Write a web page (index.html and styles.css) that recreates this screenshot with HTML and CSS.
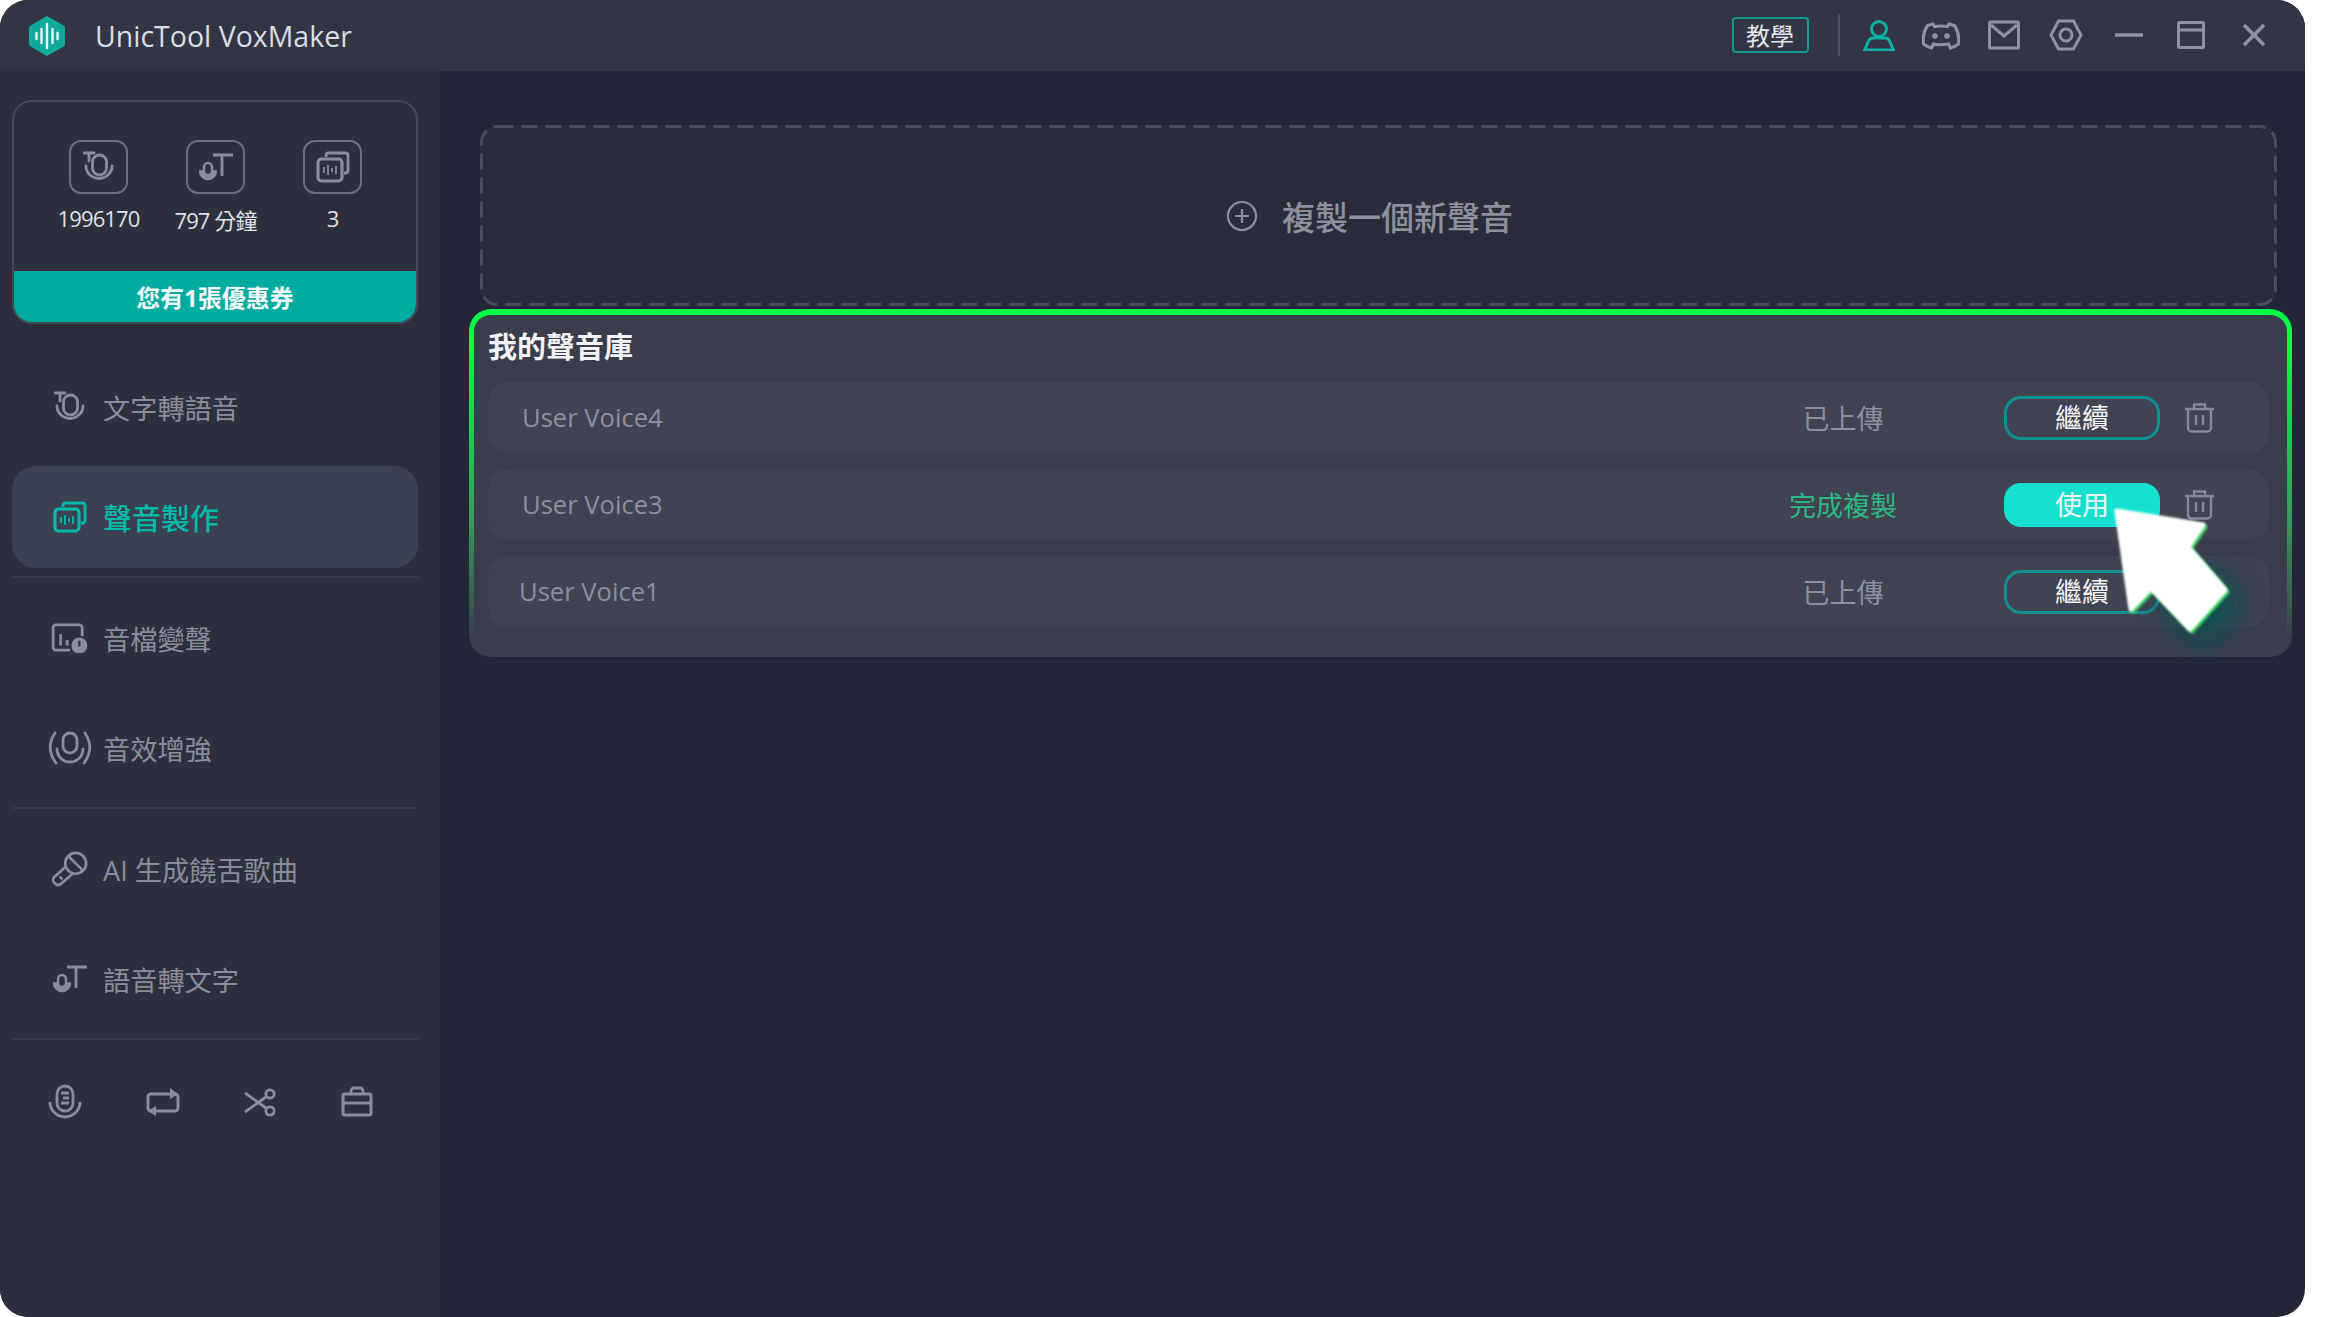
FILE: index.html
```html
<!DOCTYPE html>
<html lang="zh-Hant">
<head>
<meta charset="utf-8">
<title>UnicTool VoxMaker</title>
<link rel="stylesheet" href="styles.css">
</head>
<body>
<svg class="defs" width="0" height="0">
    <symbol id="i-tts" viewBox="0 0 32 32">
        <path d="M1 2h10M6 2v8M3 15a13 12.500 0 0 0 26 0" fill="none" stroke="currentColor" stroke-width="2.800" stroke-linecap="round"/>
        <rect x="9.500" y="4" width="14" height="20" rx="7" fill="none" stroke="currentColor" stroke-width="2.800"/>
    </symbol>
    <symbol id="i-vtt" viewBox="0 0 36 28">
        <path d="M15 2h20M24 2v21" fill="none" stroke="currentColor" stroke-width="2.800"/>
        <rect x="6" y="10" width="8" height="12" rx="4" fill="none" stroke="currentColor" stroke-width="2.400"/>
        <path d="M1.500 18a8.500 8.500 0 0 0 17 0l-3 0a5.500 5.500 0 0 1-11 0z" fill="currentColor" stroke="currentColor" stroke-width="1.400"/>
    </symbol>
    <symbol id="i-clone" viewBox="0 0 34 32">
        <path d="M10 6V4.500A2.500 2.500 0 0 1 12.500 2h17A2.500 2.500 0 0 1 32 4.500v15a2.500 2.500 0 0 1-2.500 2.500H28" fill="none" stroke="currentColor" stroke-width="2.800"/>
        <rect x="2" y="8" width="24" height="22" rx="3.500" fill="none" stroke="currentColor" stroke-width="3.200"/>
        <path d="M8 16v6M12 14v10M16 17v4M20 15v8" fill="none" stroke="currentColor" stroke-width="1.800"/>
    </symbol>
    <symbol id="i-change" viewBox="0 0 40 32">
        <path d="M20 29H5a3 3 0 0 1-3-3V5a3 3 0 0 1 3-3h25a3 3 0 0 1 3 3v9M10 12v12M17 18v6" fill="none" stroke="currentColor" stroke-width="3"/>
        <circle cx="30" cy="24" r="8.500" fill="currentColor"/>
        <path d="M30 19v6" stroke="#2c303d" stroke-width="2.400"/>
    </symbol>
    <symbol id="i-enhance" viewBox="0 0 44 36">
        <rect x="15" y="3" width="14" height="20" rx="7" fill="none" stroke="currentColor" stroke-width="2.800"/>
        <path d="M9 19a13 13 0 0 0 26 0M7 3Q-3 18 8 33M37 3Q47 18 36 33" fill="none" stroke="currentColor" stroke-width="2.800" stroke-linecap="round"/>
    </symbol>
    <symbol id="i-sing" viewBox="0 0 40 38">
        <circle cx="26" cy="13" r="11" fill="none" stroke="currentColor" stroke-width="2.800"/>
        <path d="M18 5l16 16M16 16L3 28a4 4 0 0 0 0 5l2 2a4 4 0 0 0 5 0l14-12M9 27l3 3" fill="none" stroke="currentColor" stroke-width="2.800"/>
    </symbol>
    <symbol id="i-mic" viewBox="0 0 34 36">
        <rect x="9" y="2" width="16" height="25" rx="8" fill="none" stroke="currentColor" stroke-width="2.800"/>
        <path d="M2 18a15 15 0 0 0 30 0M13 9h8M15 14h6M13 19h8" fill="none" stroke="currentColor" stroke-width="2.800"/>
    </symbol>
    <symbol id="i-loop" viewBox="0 0 34 30">
        <path d="M9 24H5a3 3 0 0 1-3-3V10a3 3 0 0 1 3-3h19M28 7h1a3 3 0 0 1 3 3v11a3 3 0 0 1-3 3H9" fill="none" stroke="currentColor" stroke-width="3"/>
        <path d="M24 1l8 6-8 5zM10 29l-8-5 8-5z" fill="currentColor"/>
    </symbol>
    <symbol id="i-cut" viewBox="0 0 34 32">
        <circle cx="27" cy="8" r="4.200" fill="none" stroke="currentColor" stroke-width="2.800"/>
        <circle cx="27" cy="25" r="4.200" fill="none" stroke="currentColor" stroke-width="2.800"/>
        <path d="M2 7l21 15M2 26L23 11" fill="none" stroke="currentColor" stroke-width="2.800"/>
    </symbol>
    <symbol id="i-case" viewBox="0 0 32 32">
        <path d="M10 8V5a3 3 0 0 1 3-3h6a3 3 0 0 1 3 3v3" fill="none" stroke="currentColor" stroke-width="2.800"/>
        <rect x="2" y="8" width="28" height="21" rx="1.500" fill="none" stroke="currentColor" stroke-width="3"/>
        <path d="M2 17h28" stroke="currentColor" stroke-width="2.800"/>
    </symbol>
    <symbol id="i-trash" viewBox="0 0 31 30">
        <path d="M1 6h29M10 5V1.500h11V5M4 6v19a3.500 3.500 0 0 0 3.500 3.500h16a3.500 3.500 0 0 0 3.500-3.500V6M12 12v10M19 12v10" fill="none" stroke="currentColor" stroke-width="2.400"/>
    </symbol>
</svg>

<div class="app">
    <header class="titlebar">
        <svg class="logo" viewBox="0 0 40 40">
            <path d="M20 0l16.500 9.500a3 3 0 0 1 1.500 2.500v16a3 3 0 0 1-1.500 2.500L20 40 3.500 30.500A3 3 0 0 1 2 28V12a3 3 0 0 1 1.500-2.500z" fill="#10a99c"/>
            <path d="M9.500 17v6M14.500 13v14M20 8v24M25.500 13v14M30.500 17v6" stroke="#e6f7f4" stroke-width="2.400" stroke-linecap="round"/>
        </svg>
        <span class="app-name">UnicTool VoxMaker</span>
        <div class="title-tools">
            <span class="tutorial">教學</span>
            <span class="title-sep"></span>
            <span class="tool tool-on"><svg viewBox="0 0 32 32" width="32" height="32"><circle cx="16" cy="10" r="7.500" fill="none" stroke="currentColor" stroke-width="3"/><path d="M1.500 31l4-9a5 5 0 0 1 4.500-3h12a5 5 0 0 1 4.500 3l4 9z" fill="none" stroke="currentColor" stroke-width="3"/></svg></span>
            <span class="tool"><svg viewBox="0 0 38 32" width="38" height="32"><path d="M11 5Q7 6 5 7 0 16 1.500 25q4 3 8 4l2-4q4 1.500 15 0l2 4q4-1 8-4Q38 16 33 7q-2-1-6-2l-1.500 2.500q-6.500-1-13 0z" fill="none" stroke="currentColor" stroke-width="3.200"/><circle cx="13" cy="17" r="2.800" fill="currentColor"/><circle cx="25" cy="17" r="2.800" fill="currentColor"/></svg></span>
            <span class="tool"><svg viewBox="0 0 32 32" width="32" height="32"><rect x="1.500" y="3" width="29" height="26" rx="1" fill="none" stroke="currentColor" stroke-width="3"/><path d="M3 6l13 11L29 6" fill="none" stroke="currentColor" stroke-width="3"/></svg></span>
            <span class="tool"><svg viewBox="0 0 34 32" width="34" height="32"><path d="M9.500 2h15L32 16l-7.500 14h-15L2 16z" fill="none" stroke="currentColor" stroke-width="3"/><circle cx="17" cy="16" r="6" fill="none" stroke="currentColor" stroke-width="3"/></svg></span>
            <span class="tool"><svg viewBox="0 0 30 32" width="30" height="32"><path d="M1 16h28" stroke="currentColor" stroke-width="3.500"/></svg></span>
            <span class="tool"><svg viewBox="0 0 28 32" width="28" height="32"><rect x="1.500" y="3.500" width="25" height="25" rx="1" fill="none" stroke="currentColor" stroke-width="3"/><path d="M1.500 11h25" stroke="currentColor" stroke-width="3"/></svg></span>
            <span class="tool"><svg viewBox="0 0 24 32" width="24" height="32"><path d="M2 6l20 20M22 6L2 26" stroke="currentColor" stroke-width="3.600"/></svg></span>
        </div>
    </header>

    <div class="content">
        <aside class="sidebar">
            <div class="account">
                <div class="stats">
                    <div class="stat">
                        <span class="stat-box"><svg width="32" height="32"><use href="#i-tts"/></svg></span>
                        <span class="stat-num">1996170</span>
                    </div>
                    <div class="stat">
                        <span class="stat-box"><svg width="36" height="28"><use href="#i-vtt"/></svg></span>
                        <span class="stat-num">797 分鐘</span>
                    </div>
                    <div class="stat">
                        <span class="stat-box"><svg width="34" height="32"><use href="#i-clone"/></svg></span>
                        <span class="stat-num">3</span>
                    </div>
                </div>
                <div class="coupon">您有1張優惠券</div>
            </div>

            <nav class="nav">
                <a class="nav-item"><span class="nav-icon"><svg width="32" height="32"><use href="#i-tts"/></svg></span><span>文字轉語音</span></a>
                <a class="nav-item active"><span class="nav-icon"><svg width="34" height="32"><use href="#i-clone"/></svg></span><span>聲音製作</span></a>
                <div class="nav-sep"></div>
                <a class="nav-item"><span class="nav-icon"><svg width="38" height="30"><use href="#i-change"/></svg></span><span>音檔變聲</span></a>
                <a class="nav-item"><span class="nav-icon"><svg width="44" height="36"><use href="#i-enhance"/></svg></span><span>音效增強</span></a>
                <div class="nav-sep"></div>
                <a class="nav-item"><span class="nav-icon"><svg width="38" height="36"><use href="#i-sing"/></svg></span><span>AI 生成饒舌歌曲</span></a>
                <a class="nav-item"><span class="nav-icon"><svg width="36" height="28"><use href="#i-vtt"/></svg></span><span>語音轉文字</span></a>
                <div class="nav-sep"></div>
            </nav>

            <div class="side-tools">
                <svg width="34" height="36"><use href="#i-mic"/></svg>
                <svg width="34" height="30"><use href="#i-loop"/></svg>
                <svg width="34" height="32"><use href="#i-cut"/></svg>
                <svg width="32" height="32"><use href="#i-case"/></svg>
            </div>
        </aside>

        <main class="main">
            <div class="clone-new">
                <svg class="dash" width="1797" height="181"><rect x="1.500" y="1.500" width="1794" height="178" rx="16" fill="none" stroke="#4b4e5a" stroke-width="3" stroke-dasharray="16 8"/></svg>
                <svg width="32" height="32" viewBox="0 0 32 32"><circle cx="16" cy="16" r="14" fill="none" stroke="#8e919c" stroke-width="2.200"/><path d="M9 16h14M16 9v14" stroke="#8e919c" stroke-width="2.200"/></svg>
                <span>複製一個新聲音</span>
            </div>

            <section class="library">
                <h2 class="library-title">我的聲音庫</h2>
                <div class="voice-row">
                    <span class="voice-name">User Voice4</span>
                    <span class="voice-state">已上傳</span>
                    <button class="btn">繼續</button>
                    <svg class="trash" width="31" height="30"><use href="#i-trash"/></svg>
                </div>
                <div class="voice-row">
                    <span class="voice-name">User Voice3</span>
                    <span class="voice-state done">完成複製</span>
                    <button class="btn btn-use">使用</button>
                    <svg class="trash" width="31" height="30"><use href="#i-trash"/></svg>
                </div>
                <div class="voice-row">
                    <span class="voice-name voice-name-tight">User Voice1</span>
                    <span class="voice-state">已上傳</span>
                    <button class="btn">繼續</button>
                    <svg class="trash" width="31" height="30"><use href="#i-trash"/></svg>
                </div>
                <svg class="cursor" width="200" height="200" viewBox="0 0 200 200">
                    <defs>
                        <filter id="glow" x="-60%" y="-60%" width="220%" height="220%"><feGaussianBlur stdDeviation="13"/></filter>
                        <filter id="edge"><feGaussianBlur stdDeviation="1"/></filter>
                    </defs>
                    <path d="M85 90L135 95 155 125 115 170 70 130z" fill="#08504d" filter="url(#glow)"/>
                    <path d="M29 33L115 47 100 69 137 112 102 151 63 110 43 131z" fill="#36c95f" stroke="#36c95f" stroke-width="5" stroke-linejoin="round" filter="url(#edge)"/>
                    <path d="M27 31L113 45 98 67 135 110 100 149 61 108 41 129z" fill="#fff" stroke="#fff" stroke-width="5" stroke-linejoin="round" filter="url(#edge)"/>
                </svg>
            </section>
        </main>
    </div>
</div>
</body>
</html>
```

FILE: styles.css
```css
body {
    margin: 0;
    background: #fff;
    font-family: "Open Sans", "Noto Sans CJK TC", sans-serif;
}

.defs {
    display: block;
    height: 0;
}

.app {
    width: 2305px;
    height: 1317px;
    display: flex;
    flex-direction: column;
    background: #232636;
    border-radius: 28px;
    overflow: hidden;
}

/* title bar */
.titlebar {
    height: 71px;
    flex: none;
    display: flex;
    align-items: center;
    padding: 0 20px 0 27px;
    background: #323644;
}
.logo {
    width: 40px;
    height: 40px;
}
.app-name {
    margin-left: 28px;
    font-size: 28.5px;
    color: #d9dde4;
}
.title-tools {
    margin: -2px 0 0 auto;
    display: flex;
    align-items: center;
}
.tutorial {
    width: 77px;
    height: 36px;
    box-sizing: border-box;
    display: flex;
    align-items: center;
    justify-content: center;
    border: 2px solid #0f9d95;
    border-radius: 4px;
    font-size: 24px;
    color: #e6e8ec;
}
.title-sep {
    width: 2px;
    height: 42px;
    margin: 0 8px 0 29px;
    background: #4e515c;
}
.tool {
    width: 62.5px;
    height: 40px;
    display: flex;
    align-items: center;
    justify-content: center;
    color: #8f929f;
}
.tool-on {
    color: #0fb0a3;
}

.content {
    flex: 1;
    display: flex;
    min-height: 0;
}

/* sidebar */
.sidebar {
    width: 440px;
    flex: none;
    box-sizing: border-box;
    padding: 29px 22px 0 12px;
    background: #2c303d;
    color: #8a8e9b;
}
.account {
    height: 224px;
    box-sizing: border-box;
    display: flex;
    flex-direction: column;
    border: 2px solid #454956;
    border-radius: 20px;
    overflow: hidden;
}
.stats {
    flex: 1;
    display: flex;
    padding: 38px 20px 0 26px;
}
.stat {
    width: 117px;
    display: flex;
    flex-direction: column;
    align-items: center;
}
.stat-box {
    width: 59px;
    height: 54px;
    box-sizing: border-box;
    display: flex;
    align-items: center;
    justify-content: center;
    border: 2px solid #6c707d;
    border-radius: 12px;
    color: #8a8e9b;
}
.stat-num {
    margin-top: 9px;
    font-size: 22px;
    letter-spacing: -0.9px;
    white-space: nowrap;
    color: #dfe2e8;
}
.coupon {
    height: 51px;
    display: flex;
    align-items: center;
    justify-content: center;
    background: #00ac9f;
    font-size: 24px;
    font-weight: 700;
    color: #f2f8f7;
}

.nav {
    margin-top: 32px;
}
.nav-item {
    height: 102px;
    display: flex;
    align-items: center;
    gap: 13px;
    padding-left: 38px;
    margin-bottom: 8px;
    border-radius: 24px;
    font-size: 27.2px;
}
.nav-icon {
    width: 40px;
    flex: none;
    display: flex;
    justify-content: center;
}
.nav-icon svg {
    flex: none;
}
.nav-item.active {
    background: #3c4152;
    color: #00b9a9;
    font-size: 29px;
    font-weight: 500;
}
.nav-sep {
    height: 2px;
    margin: 2px 0 9px;
    background: #383b48;
}
.side-tools {
    display: flex;
    justify-content: space-between;
    padding: 35px 45px 0 36px;
    align-items: center;
}

/* main area */
.main {
    flex: 1;
    padding: 54px 13px 0 29px;
}
.clone-new {
    position: relative;
    height: 181px;
    margin: 0 15px 0 11px;
    padding-right: 18px;
    display: flex;
    align-items: center;
    justify-content: center;
    gap: 24px;
    border-radius: 16px;
    background: #292d3a;
    font-size: 33px;
    font-weight: 500;
    color: #8e919c;
}
.dash {
    position: absolute;
    left: 0;
    top: 0;
}

.library {
    position: relative;
    margin-top: 3px;
    padding: 0 18px 30px 14px;
    border: solid transparent;
    border-width: 6px 5px 0;
    border-radius: 22px;
    background: linear-gradient(#3a3d4b, #3a3d4b) padding-box,
        linear-gradient(#00ff44 10%, #3a9a5c 60%, #3a3d4b 95%) border-box;
}
.library-title {
    height: 63px;
    margin: 0 0 4px;
    font-size: 29px;
    line-height: 63px;
    font-weight: 700;
    color: #f2f3f5;
}
.voice-row {
    height: 71px;
    display: flex;
    align-items: center;
    margin-bottom: 16px;
    padding: 0 54px 0 34px;
    border-radius: 20px;
    background: #404351;
    color: #8c909d;
}
.voice-row:last-of-type {
    margin-bottom: 0;
}
.voice-name {
    flex: 1;
    font-size: 25.6px;
}
.voice-name-tight {
    margin-left: -3px;
}
.voice-state {
    width: 160px;
    text-align: center;
    margin-right: 81px;
    font-size: 27px;
}
.voice-state.done {
    color: #2fb884;
}
.btn {
    width: 156px;
    height: 44px;
    padding: 0;
    border: 3px solid #128f93;
    border-radius: 17px;
    background: none;
    font-family: inherit;
    font-size: 27px;
    line-height: 1;
    color: #f4f5f7;
}
.btn-use {
    border-color: #15e0d0;
    background: #15e0d0;
}
.trash {
    margin-left: 24px;
    color: #868a97;
}
.cursor {
    position: absolute;
    left: 1616px;
    top: 165px;
}
```
